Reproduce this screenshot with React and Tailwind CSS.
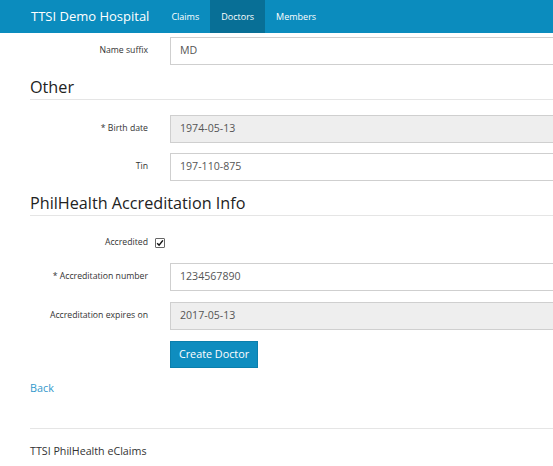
import React from "react";

const Label = ({ children }) => (
  <div className="w-[118px] shrink-0 text-right text-[8.7px] text-[#333] pr-0">{children}</div>
);

const Input = ({ value, disabled }) => (
  <div
    className={`ml-[22px] w-[600px] h-[28px] shrink-0 border border-[#cfcfcf] flex items-center pl-[9px] text-[10.6px] text-[#555] ${
      disabled ? "bg-[#eeeeee]" : "bg-white"
    }`}
  >
    {value}
  </div>
);

const Row = ({ label, value, disabled, className = "" }) => (
  <div className={`flex items-center ${className}`}>
    <Label>{label}</Label>
    <Input value={value} disabled={disabled} />
  </div>
);

const Heading = ({ children, className = "" }) => (
  <div className={`w-[700px] border-b border-[#e5e5e5] pb-[2px] ${className}`}>
    <div className="h-[20px] leading-[20px] text-[16.2px] text-[#222]">{children}</div>
  </div>
);

export default function App() {
  return (
    <div
      className="w-[553px] h-[466px] overflow-hidden bg-white"
      style={{ fontFamily: '"Open Sans", "Liberation Sans", sans-serif' }}
    >
      <div className="h-[33px] bg-[#0b8cbe] flex items-stretch text-white">
        <div className="pl-[31px] pr-[11px] flex items-center text-[13px]">TTSI Demo Hospital</div>
        <div className="px-[11px] flex items-center text-[9px]">Claims</div>
        <div className="px-[11px] flex items-center text-[9px] bg-[#086f96]">Doctors</div>
        <div className="px-[11px] flex items-center text-[9px]">Members</div>
      </div>

      <div className="pl-[30px]">
        <Row className="mt-[4px]" label="Name suffix" value="MD" />

        <Heading className="mt-[12px]">Other</Heading>

        <Row className="mt-[15px]" label="* Birth date" value="1974-05-13" disabled />
        <Row className="mt-[10px]" label="Tin" value="197-110-875" />

        <Heading className="mt-[12px]">PhilHealth Accreditation Info</Heading>

        <div className="mt-[19px] h-[16px] flex items-center">
          <Label>Accredited</Label>
          <div className="ml-[7px] w-[10px] h-[10px] border border-[#666] bg-white flex items-center justify-center rounded-[1px]">
            <svg width="8" height="8" viewBox="0 0 8 8">
              <path d="M1.2 4.2 L3.1 6.2 L6.9 1.4" fill="none" stroke="#111" strokeWidth="1.5" />
            </svg>
          </div>
        </div>

        <Row className="mt-[12px]" label="* Accreditation number" value="1234567890" />
        <Row className="mt-[11px]" label="Accreditation expires on" value="2017-05-13" disabled />

        <div className="mt-[11px] ml-[140px]">
          <div className="w-[88px] h-[27px] bg-[#0f8dbf] border border-[#0b7fac] text-white text-[10.8px] flex items-center justify-center">
            Create Doctor
          </div>
        </div>

        <div className="mt-[12px] h-[16px] leading-[16px] text-[10.8px] text-[#3399cc]">Back</div>

        <div className="mt-[32px] w-[700px] border-t border-[#e5e5e5] pt-[14px]">
          <div className="h-[16px] leading-[16px] text-[10.7px] text-[#333]">TTSI PhilHealth eClaims</div>
        </div>
      </div>
    </div>
  );
}
